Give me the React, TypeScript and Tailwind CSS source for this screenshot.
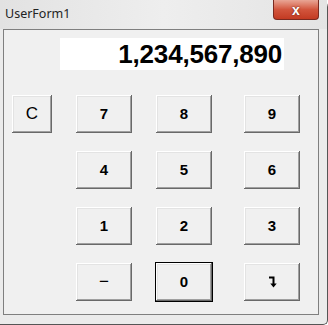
import React from 'react';

const bevel =
  'bg-[#f0f0f0] shadow-[inset_-1px_-1px_#696969,inset_1px_1px_#ffffff,inset_-2px_-2px_#a0a0a0,inset_2px_2px_#e3e3e3]';

function Key({ label, className = '', focused = false }: { label: React.ReactNode; className?: string; focused?: boolean }) {
  return (
    <div
      className={`h-[38px] flex items-center justify-center text-black ${bevel} ${
        focused ? 'outline outline-1 outline-black' : ''
      } ${className}`}
    >
      {label}
    </div>
  );
}

function EnterGlyph() {
  return (
    <svg width="9" height="12" viewBox="0 0 9 12">
      <path d="M1 1.5H5.5V8.5" stroke="#000" strokeWidth="2" fill="none" />
      <path d="M2.3 7.5H8.7L5.5 11.5Z" fill="#000" />
    </svg>
  );
}

export default function App() {
  return (
    <div className="w-[328px] h-[325px] bg-white overflow-hidden font-['Liberation_Sans',Arial,sans-serif]">
      <div className="w-[328px] h-[325px] flex flex-col bg-[#ebebeb] border-r border-b border-[#555] rounded-tr-[7px] rounded-br-[5px]">
        {/* title bar */}
        <div className="h-[29px] flex items-start bg-gradient-to-r from-[#e2e2e2] via-[#eeeeee] to-[#e4e4e4]">
          <span className="pl-[5px] pt-[5px] text-[12.5px] text-[#222] font-['Noto_Sans',sans-serif]">UserForm1</span>
          <div className="ml-auto mr-[8px] w-[46px] h-[20px] rounded-b-[4px] border border-t-0 border-[#7a2a20] bg-gradient-to-b from-[#e8a595] via-[#d2553d] to-[#c33a22] flex items-center justify-center">
            <span className="text-white font-bold text-[14px] leading-none [text-shadow:0_0_2px_#5a1a10]">x</span>
          </div>
        </div>

        {/* client area */}
        <div className="ml-[3px] mr-[8px] h-[286px] border border-[#7f7f7f] bg-[#f0f0f0] flex flex-col">
          <div className="ml-[56px] mt-[8px] w-[224px] h-[32px] bg-white flex items-center justify-end pr-[2px]">
            <span className="text-[26px] font-bold text-black tracking-[-0.2px] leading-none">1,234,567,890</span>
          </div>

          <div className="mt-[25px] flex flex-col gap-[18px] text-[15px] font-bold">
            <div className="flex">
              <Key label="C" className="ml-[8px] w-[40px] text-[17px] font-normal" />
              <Key label="7" className="ml-[24px] w-[56px]" />
              <Key label="8" className="ml-[24px] w-[56px]" />
              <Key label="9" className="ml-[32px] w-[56px]" />
            </div>
            <div className="flex">
              <Key label="4" className="ml-[72px] w-[56px]" />
              <Key label="5" className="ml-[24px] w-[56px]" />
              <Key label="6" className="ml-[32px] w-[56px]" />
            </div>
            <div className="flex">
              <Key label="1" className="ml-[72px] w-[56px]" />
              <Key label="2" className="ml-[24px] w-[56px]" />
              <Key label="3" className="ml-[32px] w-[56px]" />
            </div>
            <div className="flex">
              <Key label="−" className="ml-[72px] w-[56px] text-[17px] font-normal" />
              <Key label="0" className="ml-[24px] w-[56px]" focused />
              <Key label={<EnterGlyph />} className="ml-[32px] w-[56px]" />
            </div>
          </div>
        </div>
      </div>
    </div>
  );
}
